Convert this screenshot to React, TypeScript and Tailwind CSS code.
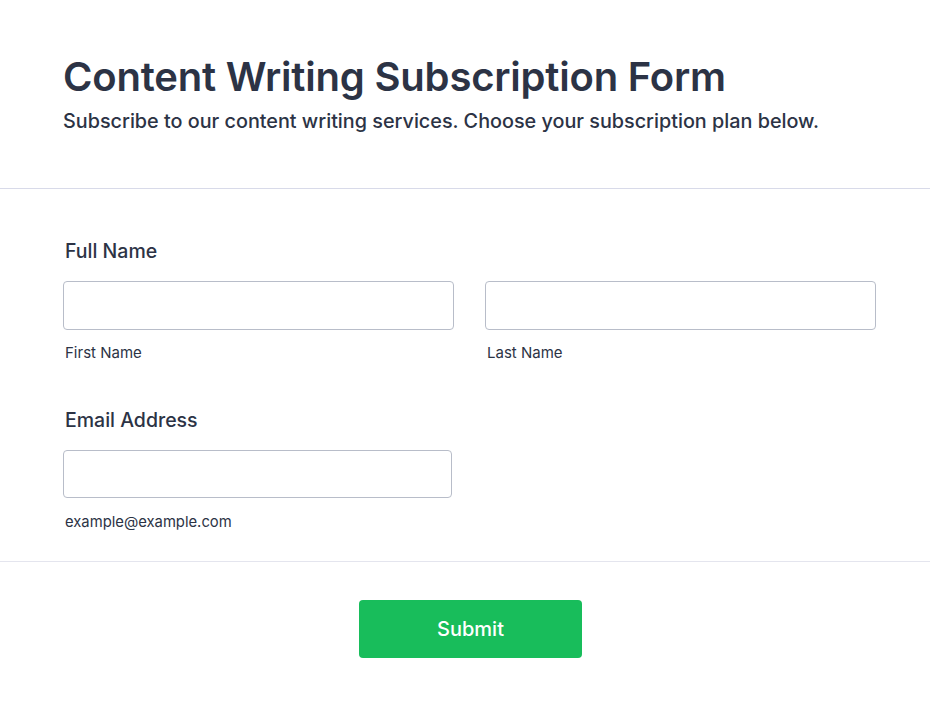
export default function App() {
  return (
    <div className="min-h-[708px] w-[930px] bg-white text-[#2c3345]" style={{ fontFamily: 'Inter, "Noto Sans", sans-serif' }}>
      {/* Header */}
      <div className="pl-[63px] pr-[40px] pt-[54px] pb-[54px] border-b border-[#d8dae9]">
        <h1 className="text-[40px] leading-[46px] font-semibold tracking-[-0.2px]">Content Writing Subscription Form</h1>
        <p className="mt-[8px] text-[19.8px] leading-[26px] font-medium">
          Subscribe to our content writing services. Choose your subscription plan below.
        </p>
      </div>

      {/* Fields */}
      <div className="pl-[63px] pr-[40px] pt-[50px] pb-[30px] border-b border-[#e4e5ee]">
        <label className="block ml-[2px] text-[19.5px] leading-[24px] font-medium">Full Name</label>
        <div className="mt-[18px] flex gap-[31px]">
          <div className="w-[391px] shrink-0">
            <input className="block w-full h-[49px] rounded-[4px] border border-[#b8bdc9] bg-white" />
            <div className="mt-[14px] ml-[2px] text-[15px] leading-[18px]">First Name</div>
          </div>
          <div className="w-[391px] shrink-0">
            <input className="block w-full h-[49px] rounded-[4px] border border-[#b8bdc9] bg-white" />
            <div className="mt-[14px] ml-[2px] text-[15px] leading-[18px]">Last Name</div>
          </div>
        </div>

        <label className="block mt-[46px] ml-[2px] text-[19.5px] leading-[24px] font-medium">Email Address</label>
        <div className="mt-[18px] w-[389px]">
          <input className="block w-full h-[48px] rounded-[4px] border border-[#b8bdc9] bg-white" />
          <div className="mt-[15px] ml-[2px] text-[14.8px] leading-[18px]">example@example.com</div>
        </div>
      </div>

      {/* Submit */}
      <div className="flex justify-center pl-[11px] pt-[38px] pb-[48px]">
        <button className="w-[223px] h-[58px] rounded-[4px] bg-[#18bd5b] text-white text-[20px] font-medium">
          Submit
        </button>
      </div>
    </div>
  );
}
